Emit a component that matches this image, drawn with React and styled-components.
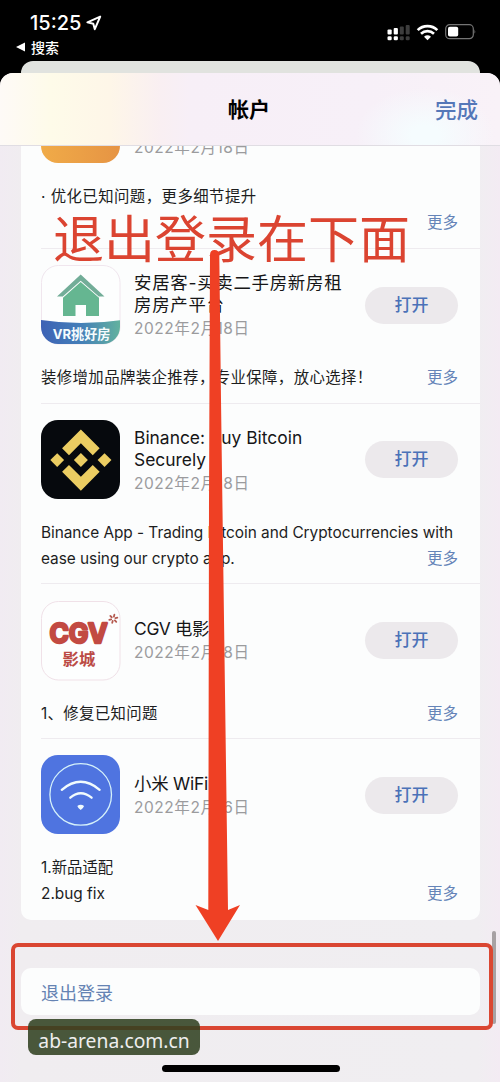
import React from 'react';
import styled, { createGlobalStyle } from 'styled-components';

const GlobalStyle = createGlobalStyle`
  * {
    box-sizing: border-box;
  }
  body {
    margin: 0;
    background: #000;
    font-family: Inter, "Noto Sans CJK SC", sans-serif;
  }
`;

const Screen = styled.div`
  position: relative;
  display: flex;
  flex-direction: column;
  width: 500px;
  height: 1082px;
  overflow: hidden;
  background: #000;
`;

const StatusBar = styled.div`
  display: flex;
  justify-content: space-between;
  height: 61px;
  padding: 11px 24px 0 16px;
  color: #fff;
`;

const Clock = styled.div`
  display: flex;
  align-items: center;
  gap: 5px;
  height: 24px;
  padding-left: 14px;
  font-size: 20px;
  font-weight: 500;
`;

const BackLink = styled.div`
  display: flex;
  align-items: center;
  gap: 6px;
  height: 24px;
  font-size: 14px;
  font-weight: 500;
`;

const Indicators = styled.div`
  display: flex;
  align-items: center;
  height: 41px;
`;

const BackCard = styled.div`
  height: 12px;
  margin: 0 20.5px;
  border-radius: 12px 12px 0 0;
  background: #e1e3df;
`;

const Sheet = styled.div`
  display: flex;
  flex: 1;
  flex-direction: column;
  min-height: 0;
  overflow: hidden;
  border-radius: 13px 13px 0 0;
  background: #f1ebf2;
`;

const NavBar = styled.div`
  display: grid;
  grid-template-columns: 1fr auto 1fr;
  flex: none;
  align-items: center;
  height: 73px;
  padding: 0 22px 2px 20px;
  border-bottom: 1px solid #e0dde3;
  background:
    radial-gradient(ellipse 70px 48px at 425px 62px, #f5fcfe 20%, transparent),
    linear-gradient(90deg, #fefaf7 0, #fefbe9 50px, #fef6e8 110px, #f9eff2 160px, #f7eff7 190px, #f7f0f8 370px, #f9f2f8 500px);
`;

const NavTitle = styled.div`
  grid-column: 2;
  font-size: 21px;
  font-weight: 700;
`;

const Done = styled.div`
  justify-self: end;
  color: #5577b8;
  font-size: 21.5px;
  font-weight: 500;
`;

const Body = styled.div`
  display: flex;
  flex: 1;
  flex-direction: column;
  min-height: 0;
  overflow: hidden;
  padding: 0 20px 0 21px;
  background: linear-gradient(90deg, #f1ebf2 0, #f0edf0 21px, #f0eef1 478px, #f3ebf3 500px);
`;

const Updates = styled.div`
  flex: none;
  margin-top: -78px;
  padding-left: 20px;
  border-radius: 10px;
  background: #fcfdfd;
`;

const Item = styled.div`
  padding: 16.4px 22px 11.7px 0;
  border-bottom: 1px solid #eeebef;
  &:last-child {
    border-bottom-color: transparent;
  }
`;

const ItemHead = styled.div`
  display: flex;
  align-items: center;
  height: 80px;
`;

const AppIcon = styled.svg`
  display: block;
  flex: none;
  width: 80px;
  height: 80px;
`;

const Info = styled.div`
  flex: 1;
  padding: 2.4px 0 0 13px;
  white-space: pre;
`;

const AppName = styled.div`
  min-height: ${p => p.$lines * 22}px;
  color: #161617;
  font-size: 17.4px;
  line-height: 22px;
  letter-spacing: ${p => p.$tracking}px;
`;

const ReleaseDate = styled.div`
  margin-top: 1px;
  color: #9b9b9d;
  font-size: 15.5px;
  line-height: 24px;
  letter-spacing: 0.55px;
`;

const OpenButton = styled.div`
  width: 93px;
  height: 37px;
  border-radius: 19px;
  background: #ece9ec;
  color: #4b72b8;
  font-size: 17px;
  font-weight: 500;
  line-height: 37px;
  text-align: center;
`;

const Notes = styled.div`
  margin-top: 20px;
  color: #1d1d1e;
  font-size: 15.4px;
  line-height: 25.8px;
  letter-spacing: ${p => p.$tracking}px;
  white-space: pre;
`;

const NotesLine = styled.div`
  display: flex;
  justify-content: space-between;
  width: ${p => (p.$last ? 'auto' : 'max-content')};
  height: 25.8px;
`;

const More = styled.span`
  color: #6584b8;
  font-size: 15.5px;
  letter-spacing: 0;
`;

const SignOut = styled.div`
  flex: none;
  height: 47px;
  margin-top: 48px;
  padding-left: 20px;
  border-radius: 10px;
  background: #fcfdfd;
  color: #6583b3;
  font-size: 18px;
  line-height: 51px;
`;

const HomeIndicator = styled.div`
  flex: none;
  align-self: center;
  width: 178px;
  height: 7px;
  margin-top: 50px;
  border-radius: 4px;
  background: #000;
`;

/* Annotations lie over the whole screen */
const ScrollThumb = styled.div`
  position: absolute;
  top: 931px;
  right: 4px;
  width: 4px;
  height: 93px;
  border-radius: 2px;
  background: #a7a1a4;
`;

const Callout = styled.div`
  position: absolute;
  top: 203px;
  left: 53px;
  color: #db4431;
  font-size: 51px;
  line-height: 74px;
  white-space: nowrap;
`;

const Highlight = styled.div`
  position: absolute;
  top: 943px;
  left: 11px;
  width: 482px;
  height: 87px;
  border: 4px solid #da4632;
  border-radius: 7px;
`;

const Arrow = styled.svg`
  position: absolute;
  top: 248px;
  left: 190px;
`;

const Watermark = styled.div`
  position: absolute;
  top: 1019px;
  left: 28px;
  width: 172px;
  height: 36px;
  border-radius: 8px;
  background: rgba(48, 64, 32, 0.87);
  color: #eeeeee;
  font-family: "Noto Sans", sans-serif;
  font-size: 19.3px;
  line-height: 44px;
  text-align: center;
`;

const OrangeIcon = () => (
  <AppIcon viewBox="0 0 80 80">
    <defs>
      <linearGradient id="orange" x1="0" y1="0" x2="1" y2="0">
        <stop offset="0" stopColor="#f0ab48" />
        <stop offset="1" stopColor="#e69444" />
      </linearGradient>
    </defs>
    <rect width="79" height="79" rx="17" fill="url(#orange)" />
  </AppIcon>
);

const HouseIcon = () => (
  <AppIcon viewBox="0 0 80 80">
    <defs>
      <linearGradient id="band" x1="0" y1="0" x2="1" y2="0">
        <stop offset="0" stopColor="#3d62b5" />
        <stop offset="0.5" stopColor="#447fb8" />
        <stop offset="1" stopColor="#63b39e" />
      </linearGradient>
      <clipPath id="houseClip">
        <rect width="79" height="79" rx="17" />
      </clipPath>
    </defs>
    <rect x="0.5" y="0.5" width="78.5" height="78.5" rx="17" fill="#fdfefe" stroke="#f0e6ee" />
    <path d="M0 55Q40 61 80 55V80H0Z" fill="url(#band)" clipPath="url(#houseClip)" />
    <path d="M39.7 9.5L63.5 31.5H57.8L39.7 15.8L21.8 31.5H16Z" fill="#72ad98" />
    <path d="M39.7 17L58 32.8V51H45V40H34.5V51H22V32.8Z" fill="#65b691" />
    <text x="40.5" y="74" textAnchor="middle" fontSize="13.1" fontWeight="700" fill="#f4fbfd">VR挑好房</text>
  </AppIcon>
);

const BinanceIcon = () => (
  <AppIcon viewBox="0 0 80 80">
    <rect width="79" height="79" rx="17" fill="#06090d" />
    <g transform="translate(9.3 9.5) scale(0.483)" fill="#ebcd62">
      <path d="M38.7 53.2L63.3 28.6L87.9 53.2L102.2 38.9L63.3 0L24.4 38.9Z" />
      <path d="M38.7 73.4L63.3 98L87.9 73.4L102.2 87.7L63.3 126.6L24.4 87.7Z" />
      <path d="M0 63.3L14.3 49L28.6 63.3L14.3 77.6Z" />
      <path d="M98 63.3L112.3 49L126.6 63.3L112.3 77.6Z" />
      <path d="M48.8 63.3L63.3 48.8L77.8 63.3L63.3 77.8Z" />
    </g>
  </AppIcon>
);

const CgvIcon = () => (
  <AppIcon viewBox="0 0 80 80">
    <rect x="0.5" y="0.5" width="78.5" height="78.5" rx="17" fill="#fdfefe" stroke="#f0e1e8" />
    <text x="8.5" y="41.5" fontSize="27" fontWeight="700" textLength="58" lengthAdjust="spacingAndGlyphs" fill="#c24a42" stroke="#c24a42" strokeWidth="2.4" strokeLinejoin="round">CGV</text>
    <g stroke="#b55a50" strokeWidth="1.8" strokeLinecap="round">
      {[0, 60, 120, 180, 240, 300].map(a => (
        <path key={a} d="M72.3 15.6V13.6" transform={`rotate(${a + 15} 72.3 17.8)`} />
      ))}
    </g>
    <text x="21.5" y="64" fontSize="16.4" fontWeight="700" fill="#bb4b45">影城</text>
  </AppIcon>
);

const MiWifiIcon = () => (
  <AppIcon viewBox="0 0 80 80">
    <rect width="79" height="79" rx="17" fill="#4f74e0" />
    <g fill="none" stroke="#d5f1fa" strokeLinecap="round">
      <circle cx="39.7" cy="39.4" r="30.8" strokeWidth="1.3" />
      <path d="M20.8 34.8Q39.7 18.8 58.6 34.8" stroke="#f1fbfd" strokeWidth="2.4" />
      <path d="M29.3 42.7Q39.7 33.7 50.6 42.7" stroke="#f1fbfd" strokeWidth="2.3" />
    </g>
    <path d="M36.3 51Q39.7 48.5 43.1 51Q42.5 53 39.7 55Q36.9 53 36.3 51Z" fill="#f1fbfd" />
  </AppIcon>
);

const LocationIcon = () => (
  <svg width="16" height="16" viewBox="0 0 16 16">
    <path d="M14.2 1.6L1.4 7.4L7.3 8.8L8.8 14.2Z" fill="none" stroke="#fff" strokeWidth="2" strokeLinejoin="round" />
  </svg>
);

const StatusIcons = () => (
  <svg width="90" height="18" viewBox="0 0 90 18">
    <g fill="#fff">
      <rect x="1.5" y="6.5" width="4.2" height="5" rx="1" />
      <rect x="7.7" y="5" width="4.2" height="6.5" rx="1" />
      <rect x="1.5" y="13.3" width="4.2" height="4" rx="1.3" />
      <rect x="7.7" y="13.3" width="4.2" height="4" rx="1.3" />
    </g>
    <g fill="#3d3d3d">
      <rect x="13.8" y="3.5" width="4" height="8" rx="1" />
      <rect x="19.7" y="2" width="4" height="9.5" rx="1" />
      <rect x="13.8" y="13.3" width="4" height="4" rx="1.3" />
      <rect x="19.7" y="13.3" width="4" height="4" rx="1.3" />
    </g>
    <g fill="none" stroke="#fff" strokeWidth="2.7">
      <path d="M31.7 7.1C37 1.7 46 1.7 51.3 7.1" />
      <path d="M35 10.8C38.8 7.3 44.2 7.3 48 10.8" />
    </g>
    <path d="M38 13.7Q41.5 11 45 13.7L41.5 17.3Z" fill="#fff" />
    <rect x="59.7" y="1.7" width="27.6" height="14" rx="4" fill="none" stroke="#747474" strokeWidth="1.2" />
    <rect x="62" y="3.8" width="10.2" height="9.8" rx="1.8" fill="#fff" />
    <path d="M88.5 6.2Q90 8.5 88.5 10.8Z" fill="#747474" />
  </svg>
);

const apps = [
  { icon: OrangeIcon, name: '', nameLines: 2, date: '2022年2月18日', notes: ['· 优化已知问题，更多细节提升', ''], tracking: 0.45 },
  { icon: HouseIcon, name: '安居客-买卖二手房新房租\n房房产平台', nameLines: 2, nameTracking: 0.75, date: '2022年2月18日', notes: ['装修增加品牌装企推荐，专业保障，放心选择！'], tracking: 0.4, open: true },
  { icon: BinanceIcon, name: 'Binance: Buy Bitcoin\nSecurely', nameLines: 2, date: '2022年2月18日', notes: ['Binance App - Trading Bitcoin and Cryptocurrencies with', 'ease using our crypto app.'], tracking: -0.04, open: true },
  { icon: CgvIcon, name: 'CGV 电影', nameLines: 1, nameTracking: -0.3, date: '2022年2月18日', notes: ['1、修复已知问题'], tracking: 0.35, open: true },
  { icon: MiWifiIcon, name: '小米 WiFi', nameLines: 1, nameTracking: -0.2, date: '2022年2月16日', notes: ['1.新品适配', '2.bug fix'], tracking: 0, open: true },
];

const AppUpdate = ({ app }) => {
  const Icon = app.icon;
  const last = app.notes.length - 1;
  return (
    <Item>
      <ItemHead>
        <Icon />
        <Info>
          <AppName $lines={app.nameLines} $tracking={app.nameTracking || 0}>{app.name}</AppName>
          <ReleaseDate>{app.date}</ReleaseDate>
        </Info>
        {app.open && <OpenButton>打开</OpenButton>}
      </ItemHead>
      <Notes $tracking={app.tracking}>
        {app.notes.map((line, i) => (
          <NotesLine key={i} $last={i === last}>
            <span>{line}</span>
            {i === last && <More>更多</More>}
          </NotesLine>
        ))}
      </Notes>
    </Item>
  );
};

export default () => <>
  <GlobalStyle />
  <Screen>
    <StatusBar>
      <div>
        <Clock>15:25 <LocationIcon /></Clock>
        <BackLink>
          <svg width="9" height="10" viewBox="0 0 9 10"><path d="M0 5L9 0.5V9.5Z" fill="#fff" /></svg>
          搜索
        </BackLink>
      </div>
      <Indicators><StatusIcons /></Indicators>
    </StatusBar>
    <BackCard />
    <Sheet>
      <NavBar>
        <NavTitle>帐户</NavTitle>
        <Done>完成</Done>
      </NavBar>
      <Body>
        <Updates>
          {apps.map((app, i) => <AppUpdate key={i} app={app} />)}
        </Updates>
        <SignOut>退出登录</SignOut>
        <HomeIndicator />
      </Body>
    </Sheet>
    <ScrollThumb />
    <Callout>退出登录在下面</Callout>
    <Arrow width="60" height="700" viewBox="0 0 60 700">
      <path d="M20 7Q20 2 24.5 2Q29 2 29.3 7L31 152L38 662L50 657L28 693L5.5 657L18.3 662L19 252Z" fill="#ef4024" />
    </Arrow>
    <Highlight />
    <Watermark>ab-arena.com.cn</Watermark>
  </Screen>
</>;
